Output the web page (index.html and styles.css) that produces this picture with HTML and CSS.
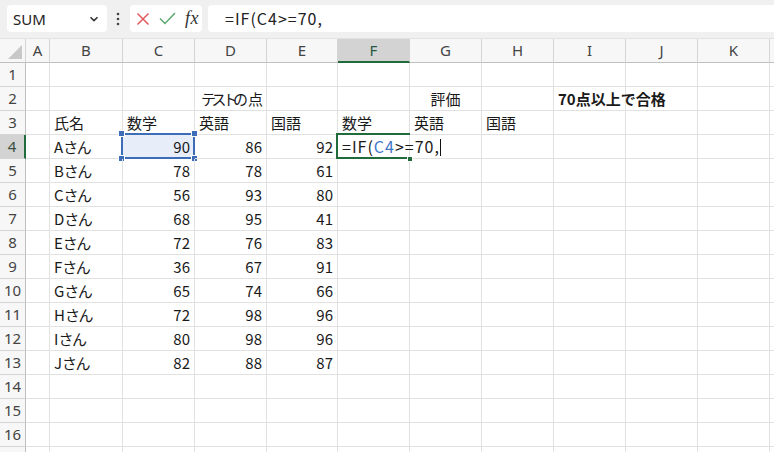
FILE: index.html
```html
<!DOCTYPE html>
<html lang="ja">
<head>
<meta charset="utf-8">
<title>Excel</title>
<link rel="stylesheet" href="styles.css">
</head>
<body>
<div class="app">
  <div class="toolbar">
    <div class="namebox">
      <span class="name">SUM</span>
      <svg class="chev" width="10" height="6" viewBox="0 0 10 6"><path d="M1.5 1.2 L5 4.6 L8.5 1.2" fill="none" stroke="#333" stroke-width="1.6"/></svg>
    </div>
    <svg class="dots" width="4" height="14" viewBox="0 0 4 14"><circle cx="2" cy="2" r="1.3" fill="#444"/><circle cx="2" cy="7" r="1.3" fill="#444"/><circle cx="2" cy="12" r="1.3" fill="#444"/></svg>
    <div class="fbtns">
      <svg class="cancel" width="14" height="14" viewBox="0 0 14 14"><path d="M1.5 1.5 L12.5 12.5 M12.5 1.5 L1.5 12.5" stroke="#e0595c" stroke-width="1.5" fill="none"/></svg>
      <svg class="enter" width="17" height="13" viewBox="0 0 17 13"><path d="M1 6.5 L6 11.5 L16 1" stroke="#5aa86e" stroke-width="1.5" fill="none"/></svg>
      <span class="fx">fx</span>
    </div>
    <div class="formula">=IF(C4&gt;=70,</div>
  </div>

  <div class="sheet">
    <div class="corner"><span class="tri"></span></div>
    <div class="ch">A</div><div class="ch">B</div><div class="ch">C</div><div class="ch">D</div><div class="ch">E</div><div class="ch ch-act">F</div><div class="ch">G</div><div class="ch">H</div><div class="ch">I</div><div class="ch">J</div><div class="ch">K</div><div class="ch"></div>

    <div class="rh">1</div><div class="c"></div><div class="c"></div><div class="c"></div><div class="c"></div><div class="c"></div><div class="c"></div><div class="c"></div><div class="c"></div><div class="c"></div><div class="c"></div><div class="c"></div><div class="c"></div>

    <div class="rh">2</div><div class="c"></div><div class="c"></div><div class="c"></div><div class="c kana"><span class="k1">テス</span><span class="k2">ト</span>の点</div><div class="c"></div><div class="c"></div><div class="c ctr">評価</div><div class="c"></div><div class="c b">70点以上で合格</div><div class="c"></div><div class="c"></div><div class="c"></div>

    <div class="rh">3</div><div class="c"></div><div class="c">氏名</div><div class="c">数学</div><div class="c">英語</div><div class="c">国語</div><div class="c">数学</div><div class="c">英語</div><div class="c">国語</div><div class="c"></div><div class="c"></div><div class="c"></div><div class="c"></div>

    <div class="rh rh-act">4</div><div class="c"></div><div class="c">A<span class="hk">さん</span></div><div class="c n sel">90<span class="h h-tl"></span><span class="h h-tr"></span><span class="h h-bl"></span><span class="h h-br"></span></div><div class="c n">86</div><div class="c n">92</div><div class="c edit">=IF(<span class="ref">C4</span>&gt;=70,<span class="caret"></span><span class="fill"></span></div><div class="c"></div><div class="c"></div><div class="c"></div><div class="c"></div><div class="c"></div><div class="c"></div>

    <div class="rh">5</div><div class="c"></div><div class="c">B<span class="hk">さん</span></div><div class="c n">78</div><div class="c n">78</div><div class="c n">61</div><div class="c"></div><div class="c"></div><div class="c"></div><div class="c"></div><div class="c"></div><div class="c"></div><div class="c"></div>

    <div class="rh">6</div><div class="c"></div><div class="c">C<span class="hk">さん</span></div><div class="c n">56</div><div class="c n">93</div><div class="c n">80</div><div class="c"></div><div class="c"></div><div class="c"></div><div class="c"></div><div class="c"></div><div class="c"></div><div class="c"></div>

    <div class="rh">7</div><div class="c"></div><div class="c">D<span class="hk">さん</span></div><div class="c n">68</div><div class="c n">95</div><div class="c n">41</div><div class="c"></div><div class="c"></div><div class="c"></div><div class="c"></div><div class="c"></div><div class="c"></div><div class="c"></div>

    <div class="rh">8</div><div class="c"></div><div class="c">E<span class="hk">さん</span></div><div class="c n">72</div><div class="c n">76</div><div class="c n">83</div><div class="c"></div><div class="c"></div><div class="c"></div><div class="c"></div><div class="c"></div><div class="c"></div><div class="c"></div>

    <div class="rh">9</div><div class="c"></div><div class="c">F<span class="hk">さん</span></div><div class="c n">36</div><div class="c n">67</div><div class="c n">91</div><div class="c"></div><div class="c"></div><div class="c"></div><div class="c"></div><div class="c"></div><div class="c"></div><div class="c"></div>

    <div class="rh">10</div><div class="c"></div><div class="c">G<span class="hk">さん</span></div><div class="c n">65</div><div class="c n">74</div><div class="c n">66</div><div class="c"></div><div class="c"></div><div class="c"></div><div class="c"></div><div class="c"></div><div class="c"></div><div class="c"></div>

    <div class="rh">11</div><div class="c"></div><div class="c">H<span class="hk">さん</span></div><div class="c n">72</div><div class="c n">98</div><div class="c n">96</div><div class="c"></div><div class="c"></div><div class="c"></div><div class="c"></div><div class="c"></div><div class="c"></div><div class="c"></div>

    <div class="rh">12</div><div class="c"></div><div class="c">I<span class="hk">さん</span></div><div class="c n">80</div><div class="c n">98</div><div class="c n">96</div><div class="c"></div><div class="c"></div><div class="c"></div><div class="c"></div><div class="c"></div><div class="c"></div><div class="c"></div>

    <div class="rh">13</div><div class="c"></div><div class="c">J<span class="hk">さん</span></div><div class="c n">82</div><div class="c n">88</div><div class="c n">87</div><div class="c"></div><div class="c"></div><div class="c"></div><div class="c"></div><div class="c"></div><div class="c"></div><div class="c"></div>

    <div class="rh">14</div><div class="c"></div><div class="c"></div><div class="c"></div><div class="c"></div><div class="c"></div><div class="c"></div><div class="c"></div><div class="c"></div><div class="c"></div><div class="c"></div><div class="c"></div><div class="c"></div>

    <div class="rh">15</div><div class="c"></div><div class="c"></div><div class="c"></div><div class="c"></div><div class="c"></div><div class="c"></div><div class="c"></div><div class="c"></div><div class="c"></div><div class="c"></div><div class="c"></div><div class="c"></div>

    <div class="rh">16</div><div class="c"></div><div class="c"></div><div class="c"></div><div class="c"></div><div class="c"></div><div class="c"></div><div class="c"></div><div class="c"></div><div class="c"></div><div class="c"></div><div class="c"></div><div class="c"></div>

    <div class="rh"></div><div class="c"></div><div class="c"></div><div class="c"></div><div class="c"></div><div class="c"></div><div class="c"></div><div class="c"></div><div class="c"></div><div class="c"></div><div class="c"></div><div class="c"></div><div class="c"></div>
  </div>
</div>
</body>
</html>
```

FILE: styles.css
```css
* { box-sizing: border-box; }
html, body {
  margin: 0;
  padding: 0;
  width: 774px;
  height: 452px;
  overflow: hidden;
  background: #ffffff;
}
.app {
  font-family: "Noto Sans CJK JP", "Noto Sans", sans-serif;
  color: #222;
  width: 774px;
  overflow: hidden;
}

/* toolbar */
.toolbar {
  height: 39px;
  background: #f0f0f0;
  border-bottom: 1px solid #e2e2e2;
  display: flex;
  align-items: flex-start;
  padding: 5px 0 0 7px;
}
.namebox {
  width: 100px;
  height: 27px;
  background: #fff;
  border-radius: 4px;
  display: flex;
  align-items: center;
  justify-content: space-between;
  padding: 0 8px 0 6px;
}
.name {
  font-family: "Noto Sans", sans-serif;
  font-size: 15px;
  color: #222;
}
.chev { margin-top: 1px; }
.dots {
  margin: 7px 10px 0 9px;
}
.fbtns {
  width: 72px;
  height: 27px;
  background: #fff;
  border-radius: 4px;
  display: flex;
  align-items: center;
  padding: 0 0 0 6px;
}
.cancel { margin-right: 9px; }
.enter { margin-right: 9px; }
.fx {
  font-family: "Liberation Serif", serif;
  font-style: italic;
  font-size: 18px;
  color: #333;
  letter-spacing: 0.5px;
  line-height: 1;
  margin-top: -2px;
}
.formula {
  margin-left: 6px;
  flex: 1;
  height: 27px;
  background: #fff;
  border-radius: 4px 0 0 4px;
  font-family: "Noto Sans CJK JP", sans-serif;
  font-size: 16px;
  letter-spacing: 1px;
  line-height: 27px;
  padding-left: 17px;
  color: #222;
}

/* sheet */
.sheet {
  display: grid;
  grid-template-columns: 26px 24px 73px 72px 72px 71px 72px 72px 72px 72px 72px 72px 72px;
  grid-auto-rows: 24px;
}
.corner {
  background: #f7f7f7;
  border-right: 1px solid #d4d4d4;
  border-bottom: 1px solid #bfbfbf;
  position: relative;
}
.tri {
  position: absolute;
  right: 3px;
  bottom: 3px;
  width: 0;
  height: 0;
  border-left: 14px solid transparent;
  border-bottom: 14px solid #c8c8c8;
}
.ch {
  background: #f7f7f7;
  border-right: 1px solid #d4d4d4;
  border-bottom: 1px solid #bfbfbf;
  text-align: center;
  font-family: "Noto Sans", sans-serif;
  font-size: 15px;
  line-height: 23px;
  color: #444;
}
.ch-act {
  background: #d3d3d3;
  border-bottom: 2px solid #1f6b3b;
  color: #2a5840;
}
.rh {
  background: #f7f7f7;
  border-right: 1px solid #bfbfbf;
  border-bottom: 1px solid #d4d4d4;
  text-align: center;
  font-family: "Noto Sans", sans-serif;
  font-size: 15px;
  line-height: 23px;
  color: #444;
}
.rh-act {
  background: #d3d3d3;
  border-right: 2px solid #1f6b3b;
  color: #3a4f42;
}
.c {
  border-right: 1px solid #e1e1e1;
  border-bottom: 1px solid #e1e1e1;
  font-size: 15px;
  line-height: 23px;
  padding: 0 4px;
  white-space: nowrap;
  overflow: visible;
  color: #1a1a1a;
  position: relative;
}
.ctr { text-align: center; }
.kana { padding: 0 0 0 6px; }
.k1 { letter-spacing: -4.5px; }
.k2 { letter-spacing: -5px; margin-left: 1px; }
.hk { letter-spacing: -1.5px; }
.n { text-align: right; }
.b { font-weight: bold; }

/* selected cell C4 */
.sel {
  background: #e8eef9;
}
.sel::before {
  content: "";
  position: absolute;
  left: -2px;
  top: -2px;
  right: -1px;
  bottom: -1px;
  border: 2px solid #3d6cb8;
}
.h {
  position: absolute;
  width: 7px;
  height: 7px;
  background: #3d6cb8;
  border: 1px solid #fff;
}
.h-tl { left: -5px; top: -5px; }
.h-tr { right: -4px; top: -5px; }
.h-bl { left: -5px; bottom: -4px; }
.h-br { right: -4px; bottom: -4px; }

/* editing cell F4 */
.edit {
  z-index: 2;
  padding-left: 4px;
  font-size: 16px;
  letter-spacing: 1px;
}
.edit::before {
  content: "";
  position: absolute;
  left: -2px;
  top: -2px;
  right: -1px;
  bottom: -1px;
  border: 2px solid #1f6b3b;
  border-right: none;
}
.ref { color: #3f78c9; }
.caret {
  display: inline-block;
  width: 1px;
  height: 17px;
  background: #111;
  vertical-align: -3px;
  margin-left: 0;
}
.fill {
  position: absolute;
  right: -4px;
  bottom: -4px;
  width: 6px;
  height: 6px;
  background: #1f6b3b;
  border: 1px solid #fff;
}
```
